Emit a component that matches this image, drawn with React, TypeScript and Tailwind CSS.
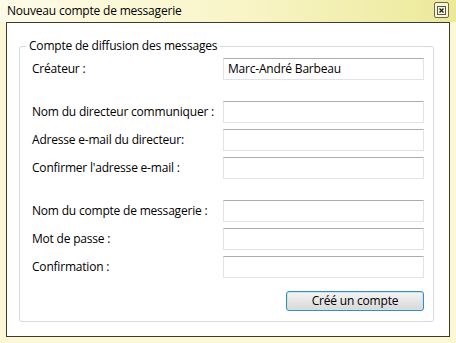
import React from 'react';

const fields1 = [
  'Nom du directeur communiquer :',
  'Adresse e-mail du directeur:',
  "Confirmer l'adresse e-mail :",
];
const fields2 = ['Nom du compte de messagerie :', 'Mot de passe :', 'Confirmation :'];

function Field({ label, value }: { label: string; value?: string }) {
  return (
    <div className="flex items-center h-[22px]">
      <span className="w-[191px] shrink-0">{label}</span>
      <div className="w-[201px] h-[22px] border border-[#e2e3ea] border-t-[#abadb3] bg-white px-[4px] flex items-center">
        {value}
      </div>
    </div>
  );
}

export default function App() {
  return (
    <div
      className="w-[456px] h-[343px] bg-[#faf7d2] flex flex-col text-[12px] tracking-[-0.2px] text-black overflow-hidden"
      style={{ fontFamily: '"Open Sans", "Noto Sans", sans-serif' }}
    >
      {/* Title bar */}
      <div className="h-[22px] flex items-center justify-between pl-[7px] pr-[7px] bg-gradient-to-r from-[#fdfbe8] via-[#f9f5c9] to-[#ece99a]">
        <span className="text-[12px] text-black -mt-[1px]">Nouveau compte de messagerie</span>
        <div className="w-[15px] h-[16px] border border-[#6b6a4a] rounded-[2px] bg-[#fbf8d8] flex items-center justify-center -mt-[2px]">
          <svg width="9" height="9" viewBox="0 0 9 9">
            <rect x="0.5" y="0.5" width="8" height="8" fill="none" stroke="#555" strokeWidth="1" />
            <path d="M2.5 2.5 L6.5 6.5 M6.5 2.5 L2.5 6.5" stroke="#222" strokeWidth="1.4" />
          </svg>
        </div>
      </div>

      {/* Client area */}
      <div className="mx-[6px] h-[315px] border border-[#3b3b33] bg-white pt-[14px] pl-[12px] pr-[15px]">
        <fieldset className="border border-[#d5dadf] rounded-[3px] h-[285px] pl-[12px] pr-[9px]">
          <legend className="-ml-[6px] px-[3px] text-[12px]">Compte de diffusion des messages</legend>
          <div className="flex flex-col mt-[3px]">
            <Field label="Créateur :" value="Marc-André Barbeau" />
            <div className="flex flex-col gap-[6px] mt-[21px]">
              {fields1.map((f) => (
                <Field key={f} label={f} />
              ))}
            </div>
            <div className="flex flex-col gap-[6px] mt-[21px]">
              {fields2.map((f) => (
                <Field key={f} label={f} />
              ))}
            </div>
            <div className="flex justify-end mt-[13px]">
              <button className="w-[138px] h-[20px] border border-[#3c8cb5] rounded-[3px] bg-gradient-to-b from-[#f4f4f4] to-[#d8d8d8] text-[12px] leading-none shadow-[inset_0_0_0_1px_#c4e5f6]">
                Créé un compte
              </button>
            </div>
          </div>
        </fieldset>
      </div>
    </div>
  );
}
